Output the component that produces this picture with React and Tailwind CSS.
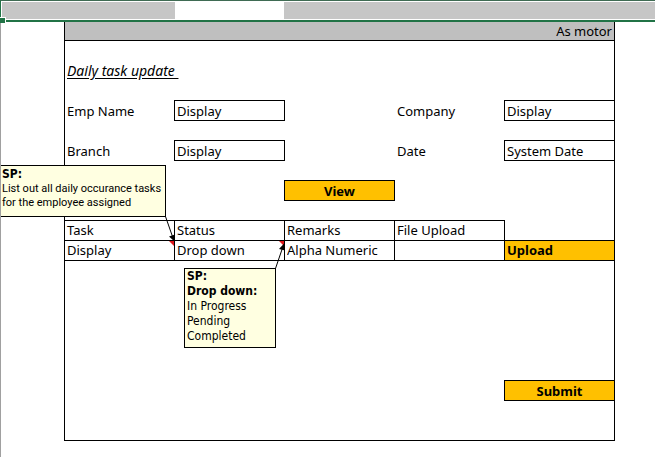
const boxClass =
  "-mt-px -ml-px block h-[21px] min-w-0 border border-black bg-white px-0.5 text-[13px] leading-5 outline-none";

function Field({ id, label, value, start }) {
  return (
    <>
      <label htmlFor={id} className={start ? "col-start-4 px-0.5" : "px-0.5"}>
        {label}
      </label>
      <input id={id} type="text" defaultValue={value} className={boxClass} />
    </>
  );
}

function ActionButton({ className, children }) {
  return (
    <button
      type="button"
      className={`-mt-px -ml-px h-[21px] border border-black bg-[#ffc000] text-[13px] leading-5 font-bold ${className}`}
    >
      {children}
    </button>
  );
}

function NoteMarker() {
  return (
    <svg viewBox="0 0 5 5" className="absolute top-0 right-0 h-[5px] w-[5px]" aria-hidden="true">
      <path d="M0 0H5V5Z" fill="#e0161b" />
    </svg>
  );
}

export default function App() {
  return (
    <div className="flex min-h-screen flex-col border-l border-[#a0a0a0] bg-white font-['Noto_Sans','Open_Sans',sans-serif] text-[13px] leading-5 text-black">
      <div className="relative -ml-px h-[22px] border-t border-b-2 border-l border-t-[#3f6b53] border-b-[#217346] border-l-[#217346] bg-white py-px pl-px">
        <div className="grid h-full grid-cols-[173px_109px_1fr]">
          <div className="bg-[#c6c6c6]" />
          <div />
          <div className="bg-[#c6c6c6]" />
        </div>
        <div className="absolute -bottom-[3px] -left-px h-[6px] w-[6px] border-t border-r border-white bg-[#217346]" />
      </div>

      <main className="mr-10 ml-[63px] border-x border-b border-black">
        <header className="h-[19px] border-b border-black bg-[#bfbfbf] px-0.5 text-right leading-[18px]">
          As motor
        </header>

        <form className="-mr-px" onSubmit={(event) => event.preventDefault()}>
          <h1 className="mt-5 h-5 px-0.5 text-sm leading-5 italic underline underline-offset-2 whitespace-pre">
            {"Daily task update "}
          </h1>

          <div className="mt-5 grid grid-cols-5">
            <Field id="emp-name" label="Emp Name" value="Display" />
            <Field id="company" label="Company" value="Display" start />
          </div>
          <div className="mt-5 grid grid-cols-5">
            <Field id="branch" label="Branch" value="Display" />
            <Field id="date" label="Date" value="System Date" start />
          </div>
          <div className="mt-5 grid grid-cols-5">
            <ActionButton className="col-start-3">View</ActionButton>
          </div>

          <table className="mt-[19px] w-full table-fixed border-separate border-spacing-0 text-left">
            <thead>
              <tr className="h-[21px]">
                {["Task", "Status", "Remarks", "File Upload"].map((name) => (
                  <th
                    key={name}
                    scope="col"
                    className="border-t border-r border-b border-black px-0.5 py-0 font-normal leading-[19px]"
                  >
                    {name}
                  </th>
                ))}
                <td className="border-b border-black p-0" />
              </tr>
            </thead>
            <tbody>
              <tr className="h-5">
                <td className="relative border-r border-b border-black px-0.5 py-0 leading-[19px]">
                  Display
                  <NoteMarker />
                  <aside className="absolute -top-[76px] -left-16 z-10 h-[52px] w-[165px] border-y border-r border-black bg-[#ffffe1] px-px font-[Roboto,sans-serif] text-[11px] leading-[14px] whitespace-nowrap">
                    <strong className="block font-['DejaVu_Sans_Condensed','DejaVu_Sans',sans-serif] text-xs leading-4">
                      SP:
                    </strong>
                    List out all daily occurance tasks
                    <br />
                    for the employee assigned
                  </aside>
                  <svg
                    viewBox="0 0 12 26"
                    className="absolute -top-[25px] left-[100px] z-10 h-[26px] w-3"
                    aria-hidden="true"
                  >
                    <path d="M0.5 0.5L8 22" stroke="#000" fill="none" />
                    <path d="M4 20.500L10 18.500L9.500 25.500Z" />
                  </svg>
                </td>
                <td className="relative border-r border-b border-black p-0">
                  <select
                    aria-label="Status"
                    className="block h-[19px] w-full appearance-none bg-transparent px-0.5 text-[13px] leading-[19px] outline-none"
                  >
                    <option>Drop down</option>
                    <option>In Progress</option>
                    <option>Pending</option>
                    <option>Completed</option>
                  </select>
                  <NoteMarker />
                  <aside className="absolute top-[27px] left-[9px] z-10 h-20 w-[92px] border border-black bg-[#ffffe1] px-0.5 font-['DejaVu_Sans_Condensed','DejaVu_Sans',sans-serif] text-xs leading-[15px] whitespace-nowrap">
                    <strong className="block">SP:</strong>
                    <strong className="block">Drop down:</strong>
                    <p>In Progress</p>
                    <p>Pending</p>
                    <p>Completed</p>
                  </aside>
                  <svg
                    viewBox="0 0 12 26"
                    className="absolute top-[2px] left-[100px] z-10 h-[26px] w-3"
                    aria-hidden="true"
                  >
                    <path d="M0.500 25.500L7.500 5" stroke="#000" fill="none" />
                    <path d="M9.500 0L10 7.500L4 6Z" />
                  </svg>
                </td>
                <td className="border-r border-b border-black p-0">
                  <input
                    type="text"
                    aria-label="Remarks"
                    defaultValue="Alpha Numeric"
                    className="block h-[19px] w-full px-0.5 text-[13px] leading-[19px] outline-none"
                  />
                </td>
                <td className="border-r border-b border-black p-0" />
                <td className="border-r border-b border-black p-0">
                  <button
                    type="button"
                    className="block h-[19px] w-full bg-[#ffc000] px-0.5 text-left text-[13px] leading-[19px] font-bold"
                  >
                    Upload
                  </button>
                </td>
              </tr>
            </tbody>
          </table>

          <div className="mt-[120px] mb-[39px] grid grid-cols-5">
            <ActionButton className="col-start-5">Submit</ActionButton>
          </div>
        </form>
      </main>
    </div>
  );
}
